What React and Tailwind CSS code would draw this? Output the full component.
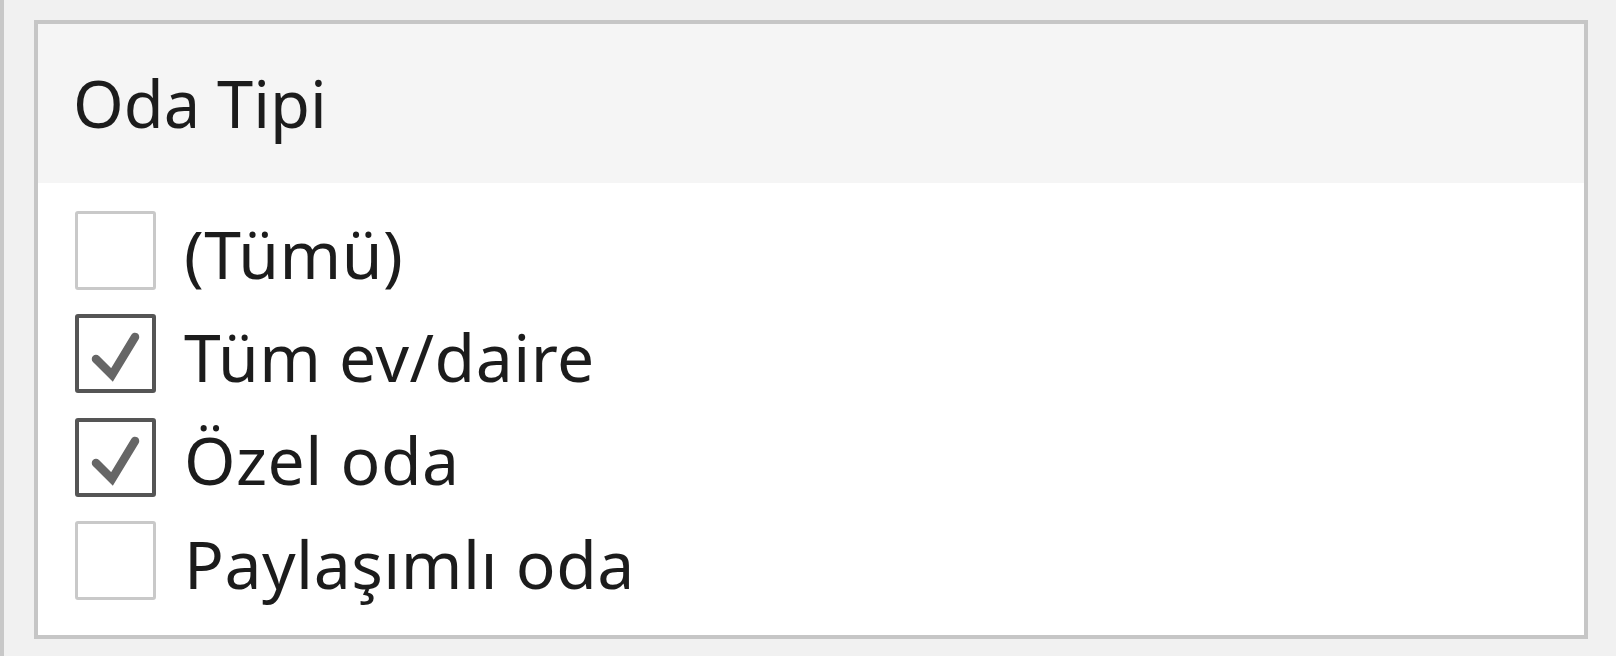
import React from "react";

const items = [
  { label: "(Tümü)", checked: false },
  { label: "Tüm ev/daire", checked: true },
  { label: "Özel oda", checked: true },
  { label: "Paylaşımlı oda", checked: false },
];

const Checkbox = ({ checked }) => {
  return (
    <div
      className={`w-[81px] h-[79px] shrink-0 rounded-[3px] bg-white ${
        checked ? "border-4 border-[#555555]" : "border-[3px] border-[#c9c9c9]"
      }`}
    >
      {checked && (
        <svg width="73" height="71" viewBox="0 0 73 71" className="block">
          <polyline
            points="17,41 33,57 56,19"
            fill="none"
            stroke="#666666"
            strokeWidth="8.5"
            strokeLinecap="round"
            strokeLinejoin="miter"
          />
        </svg>
      )}
    </div>
  );
};

export default function App() {
  return (
    <div className="w-[1616px] h-[656px] bg-[#f1f1f1] flex font-['Noto_Sans',sans-serif] text-[#1c1c1c]">
      {/* edge of neighbouring panel */}
      <div className="w-[4px] h-full bg-[#c8c8c8]" />
      <div className="pl-[30px] pt-[20px]">
        <div className="w-[1554px] h-[619px] border-4 border-[#c6c6c6] bg-white flex flex-col">
          <div className="h-[159px] bg-[#f5f5f5] pl-[35px] pt-[39px]">
            <div className="text-[65px] leading-[80px]">Oda Tipi</div>
          </div>
          <div className="pl-[37px] pt-[16px] flex flex-col">
            {items.map((item) => (
              <div key={item.label} className="h-[103.33px] flex items-center gap-[28px]">
                <Checkbox checked={item.checked} />
                <span className="text-[66px] leading-[80px] tracking-[0.5px] pt-[4px]">{item.label}</span>
              </div>
            ))}
          </div>
        </div>
      </div>
    </div>
  );
}
